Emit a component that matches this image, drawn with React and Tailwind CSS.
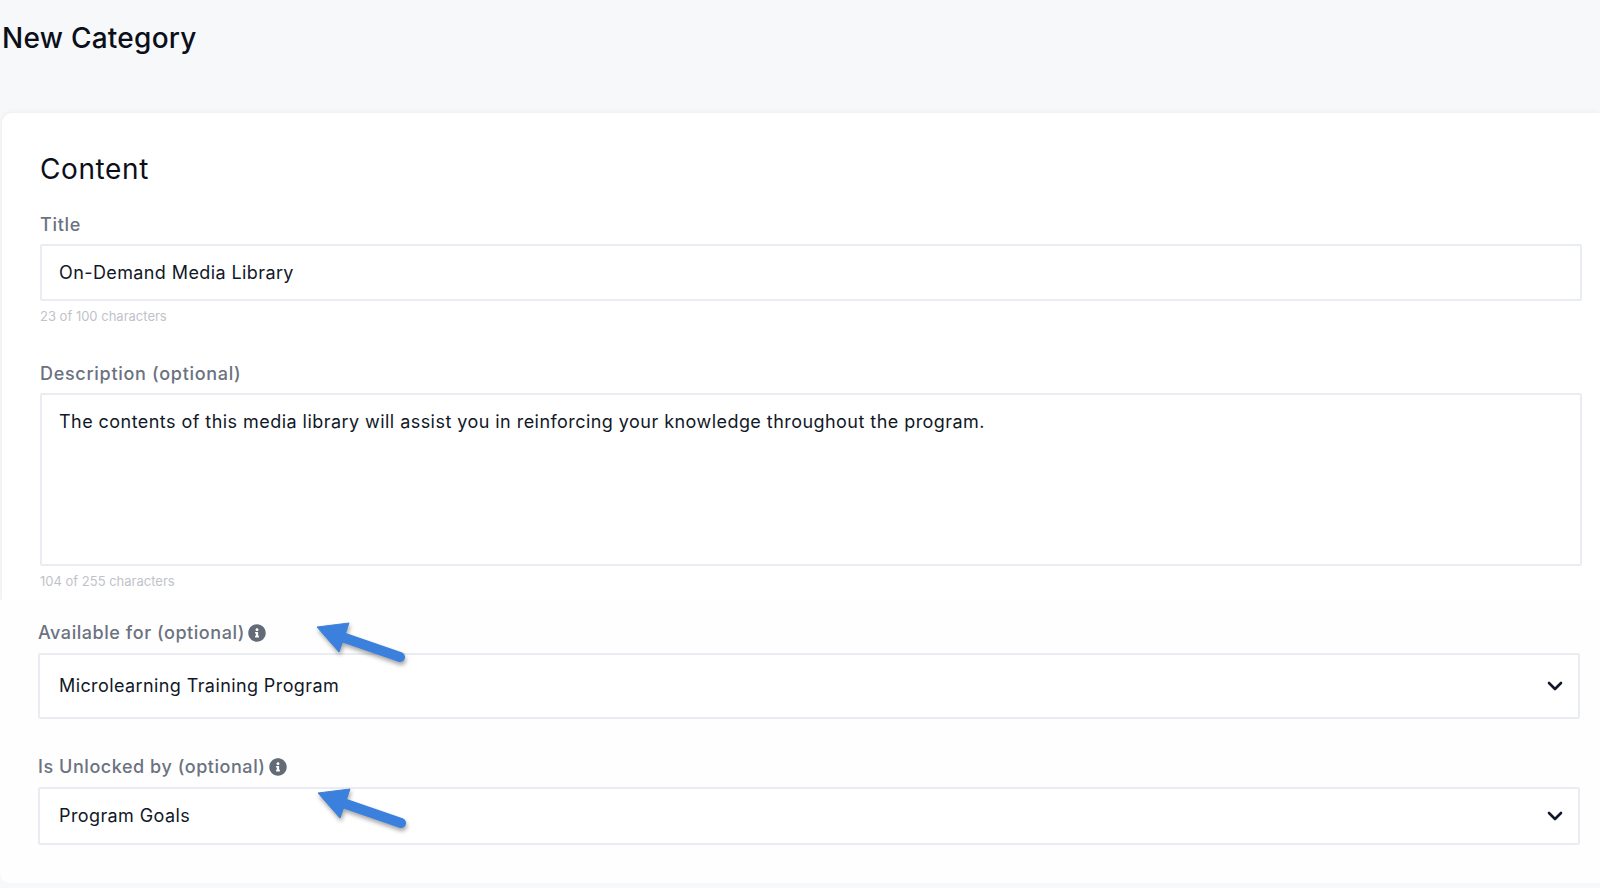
import React from "react";
import { FaInfoCircle } from "react-icons/fa";

function Chevron() {
  return (
    <svg width="16" height="10" viewBox="0 0 16 10" fill="none" className="shrink-0">
      <path d="M2 2l6 6 6-6" stroke="#111827" strokeWidth="2.6" strokeLinecap="round" strokeLinejoin="round" />
    </svg>
  );
}

function Arrow({ className }) {
  return (
    <svg width="100" height="50" viewBox="0 0 100 50" fill="none" className={className}>
      <g className="drop-shadow-[1px_3px_2px_rgba(0,0,0,0.35)]">
        <path d="M3 6L35 2L25 31Z" fill="#3a80dc" stroke="#3a80dc" strokeWidth="1" strokeLinejoin="round" />
        <path d="M28 16L86 36" stroke="#3a80dc" strokeWidth="10" strokeLinecap="round" />
      </g>
    </svg>
  );
}

function Label({ children, info }) {
  return (
    <div className={`flex items-center gap-[3px] text-[18px] leading-[24px] font-medium text-[#6b7280] ${info ? "tracking-[0.55px]" : "tracking-[0.7px]"}`}>
      <span>{children}</span>
      {info && <FaInfoCircle className="text-[#636b76] text-[18px]" />}
    </div>
  );
}

function SelectBox({ value, height }) {
  return (
    <div className={`mt-[8px] flex items-center justify-between border-2 border-[#e9edf2] rounded-[2px] bg-white pl-[19px] pr-[15px] text-[18px] text-[#111827] ${height}`}>
      <span className="-mt-[1px]">{value}</span>
      <Chevron />
    </div>
  );
}

export default function App() {
  return (
    <div className="h-[888px] overflow-hidden bg-[#f7f8fa] font-['Inter',sans-serif] tracking-[0.4px]">
      <div className="h-[113px] pl-[2px] pt-[19px]">
        <h1 className="text-[28px] leading-[38px] font-medium text-[#0b0f19] tracking-[0.26px]">New Category</h1>
      </div>

      <div className="relative ml-[2px] h-[487px] rounded-tl-[10px] bg-white pl-[38px] pr-[18px] pt-[36px] shadow-[0_0_6px_rgba(0,0,0,0.06)]">
        <h2 className="text-[28px] leading-[40px] tracking-[0.6px] text-[#0b0f19]">Content</h2>

        <div className="mt-[24px]">
          <Label>Title</Label>
          <div className="mt-[7px] flex h-[57px] items-center border-2 border-[#e9edf2] rounded-[2px] pl-[17px] text-[18px] text-[#111827]">
            On-Demand Media Library
          </div>
          <p className="mt-[6px] text-[13px] leading-[18px] tracking-normal text-[#bfc3c9]">23 of 100 characters</p>
        </div>

        <div className="mt-[37px]">
          <Label>Description (optional)</Label>
          <div className="mt-[7px] h-[173px] border-2 border-[#e9edf2] rounded-[2px] pl-[17px] pt-[13px] text-[18px] leading-[28px] tracking-[0.45px] text-[#111827]">
            The contents of this media library will assist you in reinforcing your knowledge throughout the program.
          </div>
          <p className="mt-[6px] text-[13px] leading-[18px] tracking-normal text-[#bfc3c9]">104 of 255 characters</p>
        </div>
      </div>

      <div className="relative h-[283px] rounded-bl-[10px] bg-[#fefefe] pl-[38px] pr-[20px] pt-[21px]">
        <Label info>Available for (optional)</Label>
        <SelectBox value="Microlearning Training Program" height="h-[66px]" />
        <div className="mt-[36px]">
          <Label info>Is Unlocked by (optional)</Label>
          <SelectBox value="Program Goals" height="h-[58px]" />
        </div>

        <Arrow className="absolute left-[314px] top-[21px]" />
        <Arrow className="absolute left-[315px] top-[187px]" />
      </div>
    </div>
  );
}
